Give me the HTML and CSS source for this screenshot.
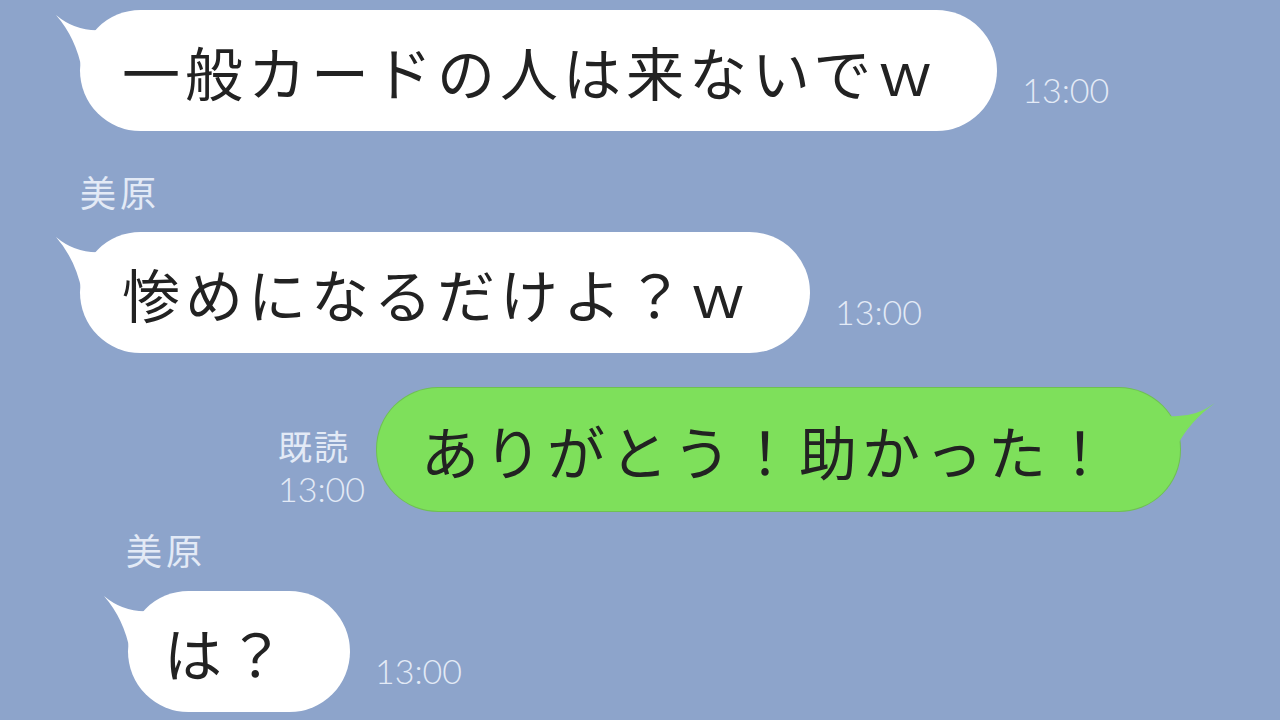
FILE: index.html
```html
<!DOCTYPE html>
<html lang="ja">
<head>
	<meta charset="UTF-8">
	<meta name="viewport" content="width=device-width, initial-scale=1.0">
	<title>トーク</title>
	<link rel="stylesheet" href="styles.css">
</head>
<body>
	<div class="chat">

		<div class="msg first">
			<div class="bubble white">
				<svg class="tail" viewBox="0 0 60 70" width="60" height="70"><path d="M2 5 Q22 22 48 20 L48 62 L28 60 Q22 28 2 5 Z"/></svg>
				一般カードの人は来ないでｗ
			</div>
			<span class="time">13:00</span>
		</div>

		<div class="name">美原</div>
		<div class="msg">
			<div class="bubble white">
				<svg class="tail" viewBox="0 0 60 70" width="60" height="70"><path d="M2 5 Q22 22 48 20 L48 62 L28 60 Q22 28 2 5 Z"/></svg>
				惨めになるだけよ？ｗ
			</div>
			<span class="time">13:00</span>
		</div>

		<div class="msg mine">
			<div class="meta">
				<span class="read">既読</span>
				<span class="time">13:00</span>
			</div>
			<div class="bubble green">
				<svg class="tail tail-right" viewBox="0 0 60 70" width="60" height="70"><path d="M2 5 Q22 20 48 18 L48 50 L40 48 Q28 24 2 5 Z"/></svg>
				ありがとう！助かった！
			</div>
		</div>

		<div class="name second">美原</div>
		<div class="msg last">
			<div class="bubble white">
				<svg class="tail" viewBox="0 0 60 70" width="60" height="70"><path d="M2 5 Q22 22 48 20 L48 62 L28 60 Q22 28 2 5 Z"/></svg>
				は？
			</div>
			<span class="time">13:00</span>
		</div>

	</div>
</body>
</html>
```

FILE: styles.css
```css
body {
	margin: 0;
	background-color: #8da4cb;
	font-family: "Noto Sans CJK JP", sans-serif;
	width: 1280px;
	height: 720px;
	overflow: hidden;
}

.chat {
	display: flex;
	flex-direction: column;
	align-items: flex-start;
	padding-top: 10px;
}

.msg {
	display: flex;
	align-items: flex-end;
	gap: 25px;
	margin-left: 80px;
	margin-top: 20px;
}

.msg.first {
	margin-top: 0;
}

.msg.mine {
	margin-left: 278px;
	margin-top: 35px;
	gap: 12px;
}

.msg.last {
	margin-left: 128px;
	margin-top: 21px;
}

.bubble {
	position: relative;
	height: 121px;
	box-sizing: border-box;
	padding: 0 58px 0 42px;
	border-radius: 61px;
	display: flex;
	align-items: center;
	font-size: 58px;
	letter-spacing: 5px;
	color: #222222;
	white-space: nowrap;
}

.bubble.white {
	background-color: #ffffff;
}

.bubble.white .tail path {
	fill: #ffffff;
}

.msg.last .bubble {
	padding-left: 36px;
	padding-right: 60px;
}

.bubble.green {
	background-color: #7ee05b;
	box-shadow: 0 0 0 1px #6fc052;
	padding: 0 66px 0 44px;
	height: 123px;
}

.bubble.green .tail path {
	fill: #7ee05b;
}

.tail {
	position: absolute;
	left: -26px;
	top: 0;
}

.tail-right {
	left: auto;
	right: -37px;
	top: 10px;
	transform: scaleX(-1);
}

.time {
	font-family: "Lato", "Open Sans", sans-serif;
	font-weight: 300;
	font-size: 34px;
	line-height: 1;
	color: #e3eaf6;
	margin-bottom: 24px;
}

.meta {
	display: flex;
	flex-direction: column;
	color: #e3eaf6;
	line-height: 43px;
	margin-bottom: 1px;
}

.meta .read {
	font-size: 34px;
	letter-spacing: 2px;
}

.meta .time {
	margin-bottom: 0;
	line-height: 43px;
}

.name {
	margin-left: 80px;
	margin-top: 39px;
	font-size: 36px;
	letter-spacing: 4px;
	line-height: 42px;
	color: #e3eaf6;
}

.name.second {
	margin-left: 126px;
	margin-top: 17px;
}
```
